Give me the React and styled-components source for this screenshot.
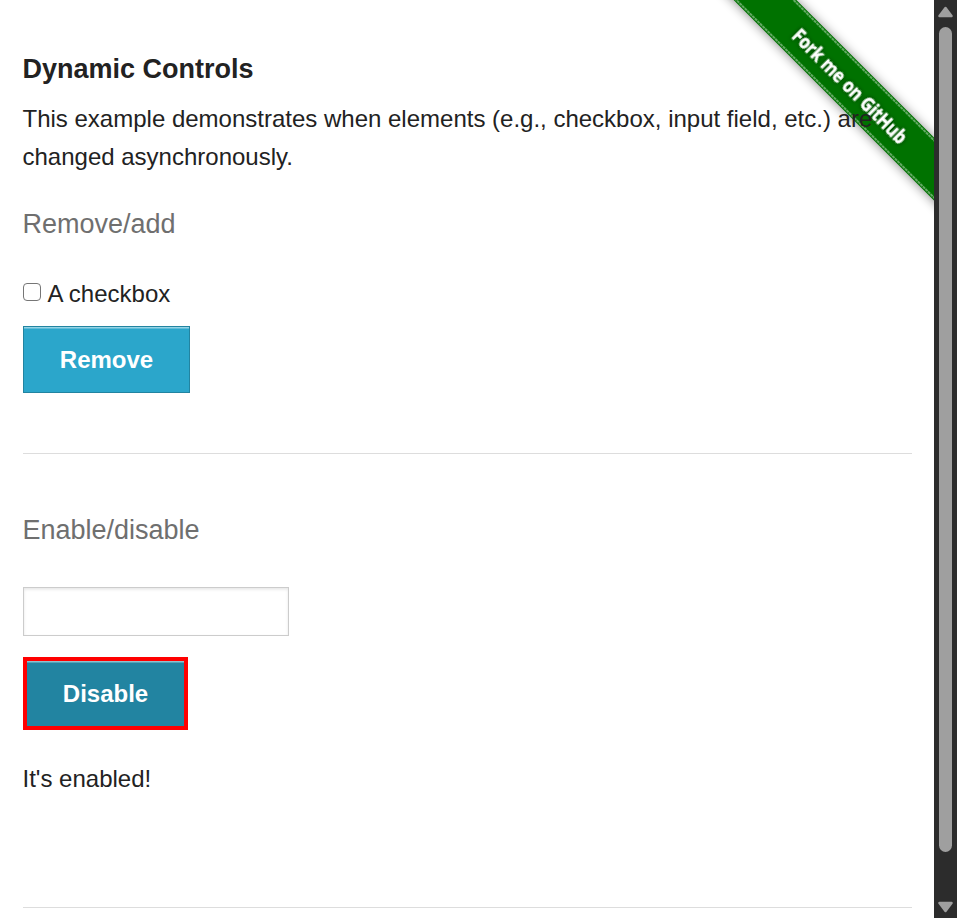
import React from "react";
import styled, { createGlobalStyle, css } from "styled-components";

const GlobalStyle = createGlobalStyle`
  *, *::before, *::after { box-sizing: border-box; }
  html, body { margin: 0; padding: 0; background: #fff; }
  body { overflow: hidden; }
`;

const Window = styled.div`
  display: flex;
  height: 918px;
  overflow: hidden;
  color: #222;
  font-family: "Liberation Sans", Arial, sans-serif;
  font-size: 24px;
  line-height: 38.4px;
`;

const Page = styled.main`
  position: relative;
  flex: 1;
  min-width: 0;
  height: 918px;
  padding: 50px 22px 0 22.5px;
  overflow: hidden;
`;

const Content = styled.div`
  position: relative;
  display: flex;
  flex-direction: column;
`;

const Ribbon = styled.svg`
  position: absolute;
  top: 0;
  right: 0;
  width: 224px;
  height: 224px;
`;

const RibbonText = styled.text`
  font-family: "Open Sans", "Noto Sans", sans-serif;
  font-size: 19px;
  font-weight: 700;
  fill: #fff;
  stroke: #fff;
  stroke-width: 0.3px;
`;

const Title = styled.h4`
  margin: 0 0 12px;
  font-size: 27px;
  font-weight: 700;
  line-height: 38px;
`;

const Intro = styled.p`
  margin: 0;
  line-height: 38px;
`;

const Subheader = styled.h4`
  height: 38px;
  margin: ${({ $top }) => $top}px 0 0;
  color: #6f6f6f;
  font-size: 27px;
  font-weight: 400;
  line-height: 38px;
`;

const CheckRow = styled.label`
  display: flex;
  align-items: flex-start;
  gap: 7px;
  height: 38px;
  margin-top: 32px;
`;

const Checkbox = styled.input`
  appearance: none;
  width: 18px;
  height: 18px;
  margin: 8px 0 0;
  border: 1.5px solid #767676;
  border-radius: 4px;
  background: #fff;
`;

const Button = styled.button`
  align-self: flex-start;
  width: 167px;
  height: 67px;
  margin: 13px 0 0;
  padding: 0 0 0 1px;
  border: 1px solid #2284a1;
  background: #2ba6cb;
  box-shadow: inset 0 1.5px 0 rgba(255, 255, 255, 0.5);
  color: #fff;
  font: 700 24px "Liberation Sans", Arial, sans-serif;

  ${({ $highlighted }) => $highlighted && css`
    width: 165px;
    height: 73px;
    margin-top: 21px;
    border: 4px solid #f00;
    background: #2284a1;
  `}
`;

const Divider = styled.hr`
  width: 100%;
  height: 1px;
  margin: ${({ $top }) => $top}px 0 0;
  border: 0;
  background: #ddd;
`;

const TextField = styled.input`
  width: 266px;
  height: 49px;
  margin: 38px 0 0;
  padding: 8px;
  border: 1px solid #ccc;
  border-radius: 0;
  background: #fff;
  box-shadow: inset 0 1.5px 3px rgba(0, 0, 0, 0.1);
  font: inherit;
`;

const Message = styled.p`
  margin: 30px 0 0;
  line-height: 38px;
`;

const Scrollbar = styled.div`
  display: flex;
  flex-direction: column;
  align-items: center;
  width: 23px;
  height: 918px;
  padding: 6px 0 5px;
  background: #2c2c2c;
`;

const Thumb = styled.div`
  width: 13px;
  height: 825px;
  margin-top: 9px;
  border-radius: 7px;
  background: #9f9f9f;
`;

const Arrow = styled.svg`
  display: block;
  width: 15px;
  height: 12px;
  fill: #9f9f9f;
  stroke: #9f9f9f;
  stroke-width: 2.5;
  stroke-linejoin: round;
  ${({ $down }) => $down && "margin-top: auto; transform: rotate(180deg);"}
`;

function ScrollArrow({ down }) {
  return (
    <Arrow $down={down} viewBox="0 0 15 12">
      <path d="M7.5 2 L13.5 10 H1.5 Z" />
    </Arrow>
  );
}

function ForkRibbon() {
  return (
    <Ribbon viewBox="0 0 224 224" aria-label="Fork me on GitHub">
      <defs>
        <filter id="bandShadow" x="-20%" y="-60%" width="140%" height="220%">
          <feGaussianBlur stdDeviation="6" />
        </filter>
        <filter id="textShadow" x="-10%" y="-40%" width="120%" height="180%">
          <feDropShadow dx="0" dy="0" stdDeviation="2" floodColor="#000" floodOpacity="0.6" />
        </filter>
      </defs>
      <g transform="translate(139.5 84.5) rotate(45)">
        <rect x="-200" y="-21" width="400" height="43" fill="#000" opacity="0.5" filter="url(#bandShadow)" />
        <rect x="-200" y="-22.2" width="400" height="44.4" fill="#007200" />
        <path d="M-200 -20.2H200M-200 20.2H200" stroke="#62a962" strokeWidth="2" strokeDasharray="3 0.6" />
        <RibbonText x="-75" y="8" textLength="153" lengthAdjust="spacingAndGlyphs" filter="url(#textShadow)">
          Fork me on GitHub
        </RibbonText>
      </g>
    </Ribbon>
  );
}

export default function App() {
  return (
    <>
      <GlobalStyle />
      <Window>
        <Page>
          <ForkRibbon />
          <Content>
            <Title>Dynamic Controls</Title>
            <Intro>
              This example demonstrates when elements (e.g., checkbox, input field, etc.) are changed asynchronously.
            </Intro>
            <Subheader $top={29}>Remove/add</Subheader>
            <CheckRow>
              <Checkbox type="checkbox" />
              A checkbox
            </CheckRow>
            <Button type="button">Remove</Button>
            <Divider $top={60} />
            <Subheader $top={57}>Enable/disable</Subheader>
            <TextField type="text" />
            <Button type="button" $highlighted>Disable</Button>
            <Message>It's enabled!</Message>
            <Divider $top={109} />
          </Content>
        </Page>
        <Scrollbar>
          <ScrollArrow />
          <Thumb />
          <ScrollArrow down />
        </Scrollbar>
      </Window>
    </>
  );
}
